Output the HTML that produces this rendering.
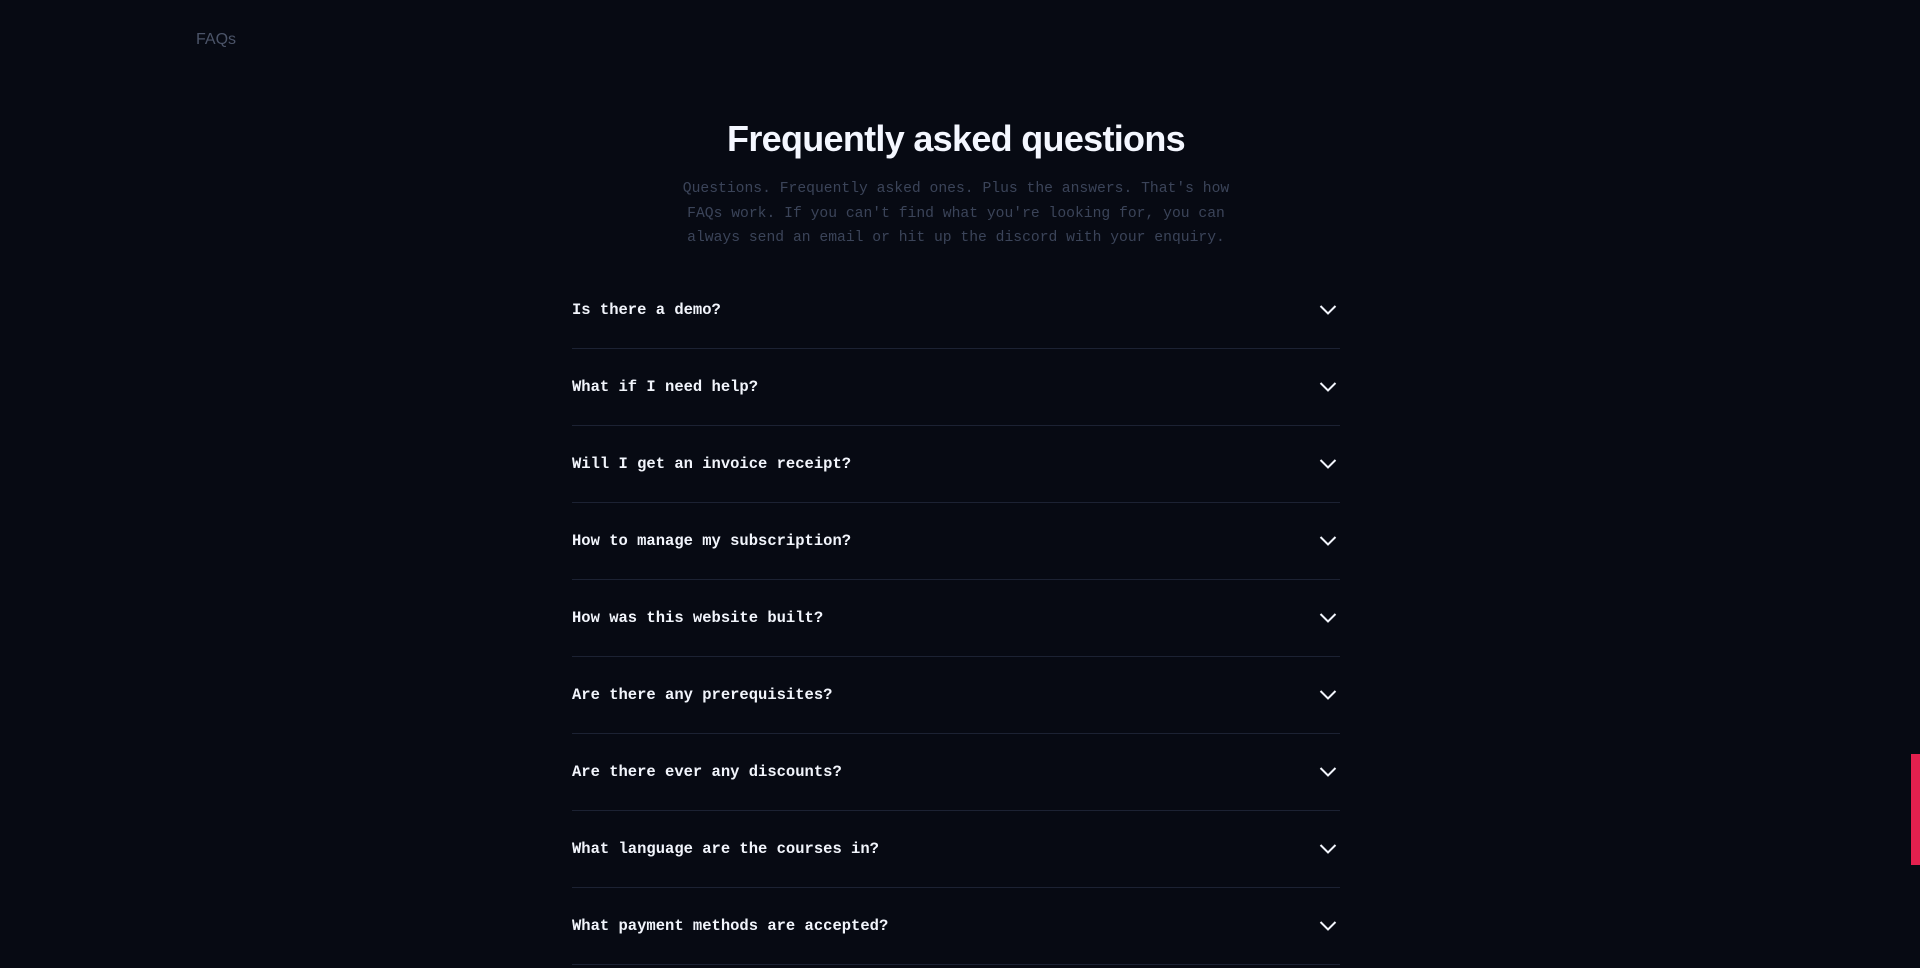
<!DOCTYPE html>
<html><head><meta charset="utf-8"><style>
html,body{margin:0;padding:0;background:#070a13;width:1920px;height:968px;overflow:hidden}
.nav{position:absolute;left:196px;top:31px;font:16px "Liberation Sans",sans-serif;color:#4b5468}
h1{position:absolute;left:0;width:1912px;top:115px;margin:0;text-align:center;font:bold 36px/48px "Liberation Sans",sans-serif;letter-spacing:-0.7px;color:#f4f7ff}
.sub{position:absolute;left:0;width:1912px;top:177px;text-align:center;font:14.7px/24.5px "Liberation Mono",monospace;color:#3b4459}
.list{position:absolute;left:572px;top:272px;width:768px}
.row{height:76px;border-bottom:1px solid #1c2233;display:flex;align-items:center;justify-content:space-between;font:bold 15.5px "Liberation Mono",monospace;color:#f2f5fc}
.row svg{margin-right:3px}
.bar{position:absolute;left:1911px;top:754px;width:9px;height:111px;background:#e3204e}
</style></head><body>
<div class="nav">FAQs</div>
<h1>Frequently asked questions</h1>
<div class="sub">Questions. Frequently asked ones. Plus the answers. That's how<br>FAQs work. If you can't find what you're looking for, you can<br>always send an email or hit up the discord with your enquiry.</div>
<div class="list">
<div class="row">Is there a demo?<svg width="18" height="12" viewBox="0 0 18 12"><path d="M1.5 2 L9 9.5 L16.5 2" fill="none" stroke="#f2f5fc" stroke-width="2"/></svg></div>
<div class="row">What if I need help?<svg width="18" height="12" viewBox="0 0 18 12"><path d="M1.5 2 L9 9.5 L16.5 2" fill="none" stroke="#f2f5fc" stroke-width="2"/></svg></div>
<div class="row">Will I get an invoice receipt?<svg width="18" height="12" viewBox="0 0 18 12"><path d="M1.5 2 L9 9.5 L16.5 2" fill="none" stroke="#f2f5fc" stroke-width="2"/></svg></div>
<div class="row">How to manage my subscription?<svg width="18" height="12" viewBox="0 0 18 12"><path d="M1.5 2 L9 9.5 L16.5 2" fill="none" stroke="#f2f5fc" stroke-width="2"/></svg></div>
<div class="row">How was this website built?<svg width="18" height="12" viewBox="0 0 18 12"><path d="M1.5 2 L9 9.5 L16.5 2" fill="none" stroke="#f2f5fc" stroke-width="2"/></svg></div>
<div class="row">Are there any prerequisites?<svg width="18" height="12" viewBox="0 0 18 12"><path d="M1.5 2 L9 9.5 L16.5 2" fill="none" stroke="#f2f5fc" stroke-width="2"/></svg></div>
<div class="row">Are there ever any discounts?<svg width="18" height="12" viewBox="0 0 18 12"><path d="M1.5 2 L9 9.5 L16.5 2" fill="none" stroke="#f2f5fc" stroke-width="2"/></svg></div>
<div class="row">What language are the courses in?<svg width="18" height="12" viewBox="0 0 18 12"><path d="M1.5 2 L9 9.5 L16.5 2" fill="none" stroke="#f2f5fc" stroke-width="2"/></svg></div>
<div class="row">What payment methods are accepted?<svg width="18" height="12" viewBox="0 0 18 12"><path d="M1.5 2 L9 9.5 L16.5 2" fill="none" stroke="#f2f5fc" stroke-width="2"/></svg></div>
</div>
<div class="bar"></div>
</body></html>
